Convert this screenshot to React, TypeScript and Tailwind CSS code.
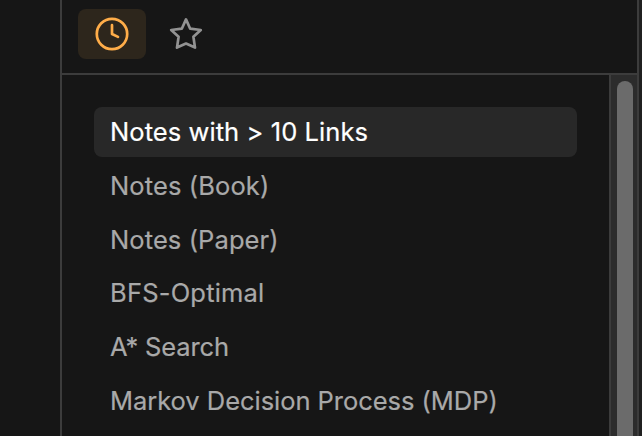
const notes = [
  { title: 'Notes with > 10 Links', spacing: 'tracking-[0.07px]' },
  { title: 'Notes (Book)', spacing: 'tracking-[0.12px]' },
  { title: 'Notes (Paper)', spacing: 'tracking-[0.1px]' },
  { title: 'BFS-Optimal', spacing: 'tracking-[0.2px]' },
  { title: 'A* Search', spacing: 'tracking-[-0.14px]' },
  { title: 'Markov Decision Process (MDP)', spacing: 'tracking-[-0.04px]' },
];

function ClockIcon() {
  return (
    <svg width="36" height="36" viewBox="0 0 36 36" fill="none" stroke="currentColor" strokeWidth="2.7" strokeLinecap="round" strokeLinejoin="round">
      <circle cx="18" cy="18" r="15.2" />
      <path d="M18 9.2V18l6 2.9" />
    </svg>
  );
}

function StarIcon() {
  return (
    <svg width="36" height="36" viewBox="0 0 36 36" fill="none" stroke="currentColor" strokeWidth="2.7" strokeLinejoin="round">
      <path d="M18 3.4L22.2 12.7L32.8 14L25.4 20.8L27 31.6L18 27.6L9 31.6L10.6 20.8L3.2 14L13.8 12.7Z" />
    </svg>
  );
}

export default function App() {
  return (
    <div className="flex h-[436px] w-[642px] overflow-hidden bg-[#161616] font-['Inter',sans-serif]">
      <aside className="w-[60px] shrink-0" />
      <main className="flex w-[579px] shrink-0 flex-col border-x-2 border-[#3c3c3c]">
        <header className="flex h-[75px] shrink-0 items-start border-b-2 border-[#3c3c3c] pl-4 pt-[9px]">
          <button className="flex h-[50px] w-[68px] items-center justify-center rounded-lg bg-[#2d261c] text-[#ffad49]">
            <ClockIcon />
          </button>
          <button className="ml-[22px] flex h-[50px] w-9 items-center justify-center text-[#929292]">
            <StarIcon />
          </button>
        </header>
        <div className="flex min-h-0 flex-1">
          <ul className="flex flex-1 flex-col gap-[3.7px] pl-8 pr-8 pt-8">
            {notes.map((note, i) => (
              <li key={note.title} className={i === 0 ? 'flex h-[50px] shrink-0 items-center rounded-lg bg-[#282828] pl-4 text-white' : 'flex h-[50px] shrink-0 items-center pl-4 text-[#a9a9a9]'}>
                <span className={`whitespace-nowrap text-[25.5px] leading-none [-webkit-text-stroke:0.2px_currentColor] ${note.spacing}`}>{note.title}</span>
              </li>
            ))}
          </ul>
          <div className="w-[28px] border-l-2 border-[#3c3c3c] bg-[#2c2c2c] pl-1.5 pt-1.5">
            <div className="h-[500px] w-4 rounded-full bg-[#6b6b6b]" />
          </div>
        </div>
      </main>
      <div className="flex-1 bg-[#202020]" />
    </div>
  );
}
